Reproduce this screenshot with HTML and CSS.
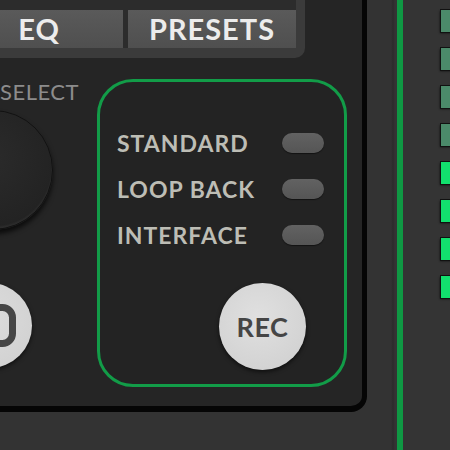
FILE: index.html
```html
<!DOCTYPE html>
<html>
<head>
<meta charset="utf-8">
<link rel="stylesheet" href="styles.css">
</head>
<body>
<div class="panel">
  <div class="bezel">
    <div class="screen">
      <div class="tab tab-eq">EQ</div>
      <div class="tab tab-presets">PRESETS</div>
    </div>
  </div>
  <div class="controls">
    <div class="left-col">
      <div class="select-label">SELECT</div>
      <div class="knob"></div>
      <div class="round-btn">
        <svg class="btn-icon" width="50" height="44" viewBox="0 0 50 44">
          <rect x="3.5" y="3.5" width="43" height="36" rx="10" ry="10" fill="none" stroke="#464646" stroke-width="7"/>
        </svg>
      </div>
    </div>
    <div class="mode-box">
      <div class="mode-row"><span class="mode-name">STANDARD</span><span class="pill"></span></div>
      <div class="mode-row"><span class="mode-name">LOOP BACK</span><span class="pill"></span></div>
      <div class="mode-row"><span class="mode-name">INTERFACE</span><span class="pill"></span></div>
      <div class="rec-wrap"><div class="rec-btn">REC</div></div>
    </div>
  </div>
</div>
<div class="side">
  <div class="rail"></div>
  <div class="leds">
    <div class="led dim"></div>
    <div class="led dim"></div>
    <div class="led dim"></div>
    <div class="led dim"></div>
    <div class="led on"></div>
    <div class="led on"></div>
    <div class="led on"></div>
    <div class="led on"></div>
  </div>
</div>
</body>
</html>
```
FILE: styles.css
```css
html, body {
  margin: 0;
  padding: 0;
}
body {
  width: 450px;
  height: 450px;
  overflow: hidden;
  background: #333333;
  display: flex;
  align-items: flex-start;
  font-family: "Lato", "Open Sans", sans-serif;
}
.panel {
  width: 362px;
  height: 406px;
  flex: none;
  background: #252525;
  border-right: 5px solid #050505;
  border-bottom: 6px solid #050505;
  border-bottom-right-radius: 16px;
  display: flex;
  flex-direction: column;
}
.bezel {
  width: 296px;
  height: 48px;
  padding: 0 9px 10px 0;
  background: #3b3b3b;
  border-bottom-right-radius: 10px;
}
.screen {
  height: 38px;
  padding-top: 10px;
  background: #2c2c2c;
  display: flex;
  gap: 5px;
  overflow: visible;
}
.tab {
  flex: none;
  width: 168px;
  height: 38px;
  background: linear-gradient(#5a5a5a, #4f4f4f);
  color: #ececec;
  font-weight: 700;
  font-size: 29px;
  letter-spacing: 1px;
  line-height: 38px;
  text-align: center;
}
.tab-eq {
  margin-left: -45px;
}
.controls {
  display: flex;
  flex: 1;
}
.left-col {
  width: 97px;
  flex: none;
  display: flex;
  flex-direction: column;
}
.select-label {
  width: 74px;
  margin-top: 21px;
  text-align: right;
  white-space: nowrap;
  color: #8c8c8c;
  font-size: 22px;
  letter-spacing: 0.5px;
  line-height: 26px;
}
.knob {
  width: 120px;
  height: 120px;
  margin-top: 5px;
  margin-left: -67px;
  border-radius: 50%;
  box-sizing: border-box;
  border: 1px solid #121212;
  background: radial-gradient(circle at 45% 40%, #2b2b2b, #232323 70%, #1c1c1c);
  box-shadow: 0 4px 5px rgba(0,0,0,0.7), inset 0 -2px 2px rgba(255,255,255,0.05);
}
.round-btn {
  width: 85px;
  height: 85px;
  margin-top: 53px;
  margin-left: -53px;
  border-radius: 50%;
  background: radial-gradient(circle at 45% 40%, #dcdcdc, #cfcfcf);
  box-shadow: 0 2px 4px rgba(0,0,0,0.6);
  display: flex;
  align-items: center;
  justify-content: flex-end;
}
.btn-icon {
  display: block;
  flex: none;
  margin-right: 16px;
}
.mode-box {
  width: 250px;
  height: 308px;
  margin-top: 21px;
  box-sizing: border-box;
  border: 3px solid #129c48;
  border-radius: 36px;
  background: #232323;
  padding: 38px 20px 0 17px;
  display: flex;
  flex-direction: column;
}
.mode-row {
  height: 46px;
  display: flex;
  align-items: center;
  justify-content: space-between;
}
.mode-name {
  color: #bdbdb5;
  font-weight: 700;
  font-size: 23px;
  letter-spacing: 1px;
}
.pill {
  width: 42px;
  height: 20px;
  border-radius: 10px;
  background: linear-gradient(#626262, #555555);
  box-shadow: 0 1px 1px rgba(0,0,0,0.5);
}
.rec-wrap {
  display: flex;
  justify-content: flex-end;
  margin-top: 25px;
  padding-right: 18px;
}
.rec-btn {
  width: 87px;
  height: 87px;
  border-radius: 50%;
  background: radial-gradient(circle at 45% 40%, #e0e0e0, #cecece);
  box-shadow: 0 2px 4px rgba(0,0,0,0.6);
  color: #454545;
  font-weight: 700;
  font-size: 27px;
  letter-spacing: 0.5px;
  display: flex;
  align-items: center;
  justify-content: center;
}
.side {
  flex: 1;
  height: 450px;
  display: flex;
  background: linear-gradient(90deg, #333 0, #333 24px, #2c2c2c 26px, #343434 28px);
}
.rail {
  width: 6px;
  height: 450px;
  margin-left: 30px;
  background: #0f9843;
  flex: none;
}
.leds {
  margin-left: 38px;
  padding-top: 10px;
  display: flex;
  flex-direction: column;
  gap: 16px;
}
.led {
  width: 22px;
  height: 22px;
  box-shadow: 0 0 0 1px #111, -1px 1px 2px rgba(0,0,0,0.8);
}
.led.dim {
  background: #4b8a6a;
}
.led.on {
  background: #12e06e;
}
```
